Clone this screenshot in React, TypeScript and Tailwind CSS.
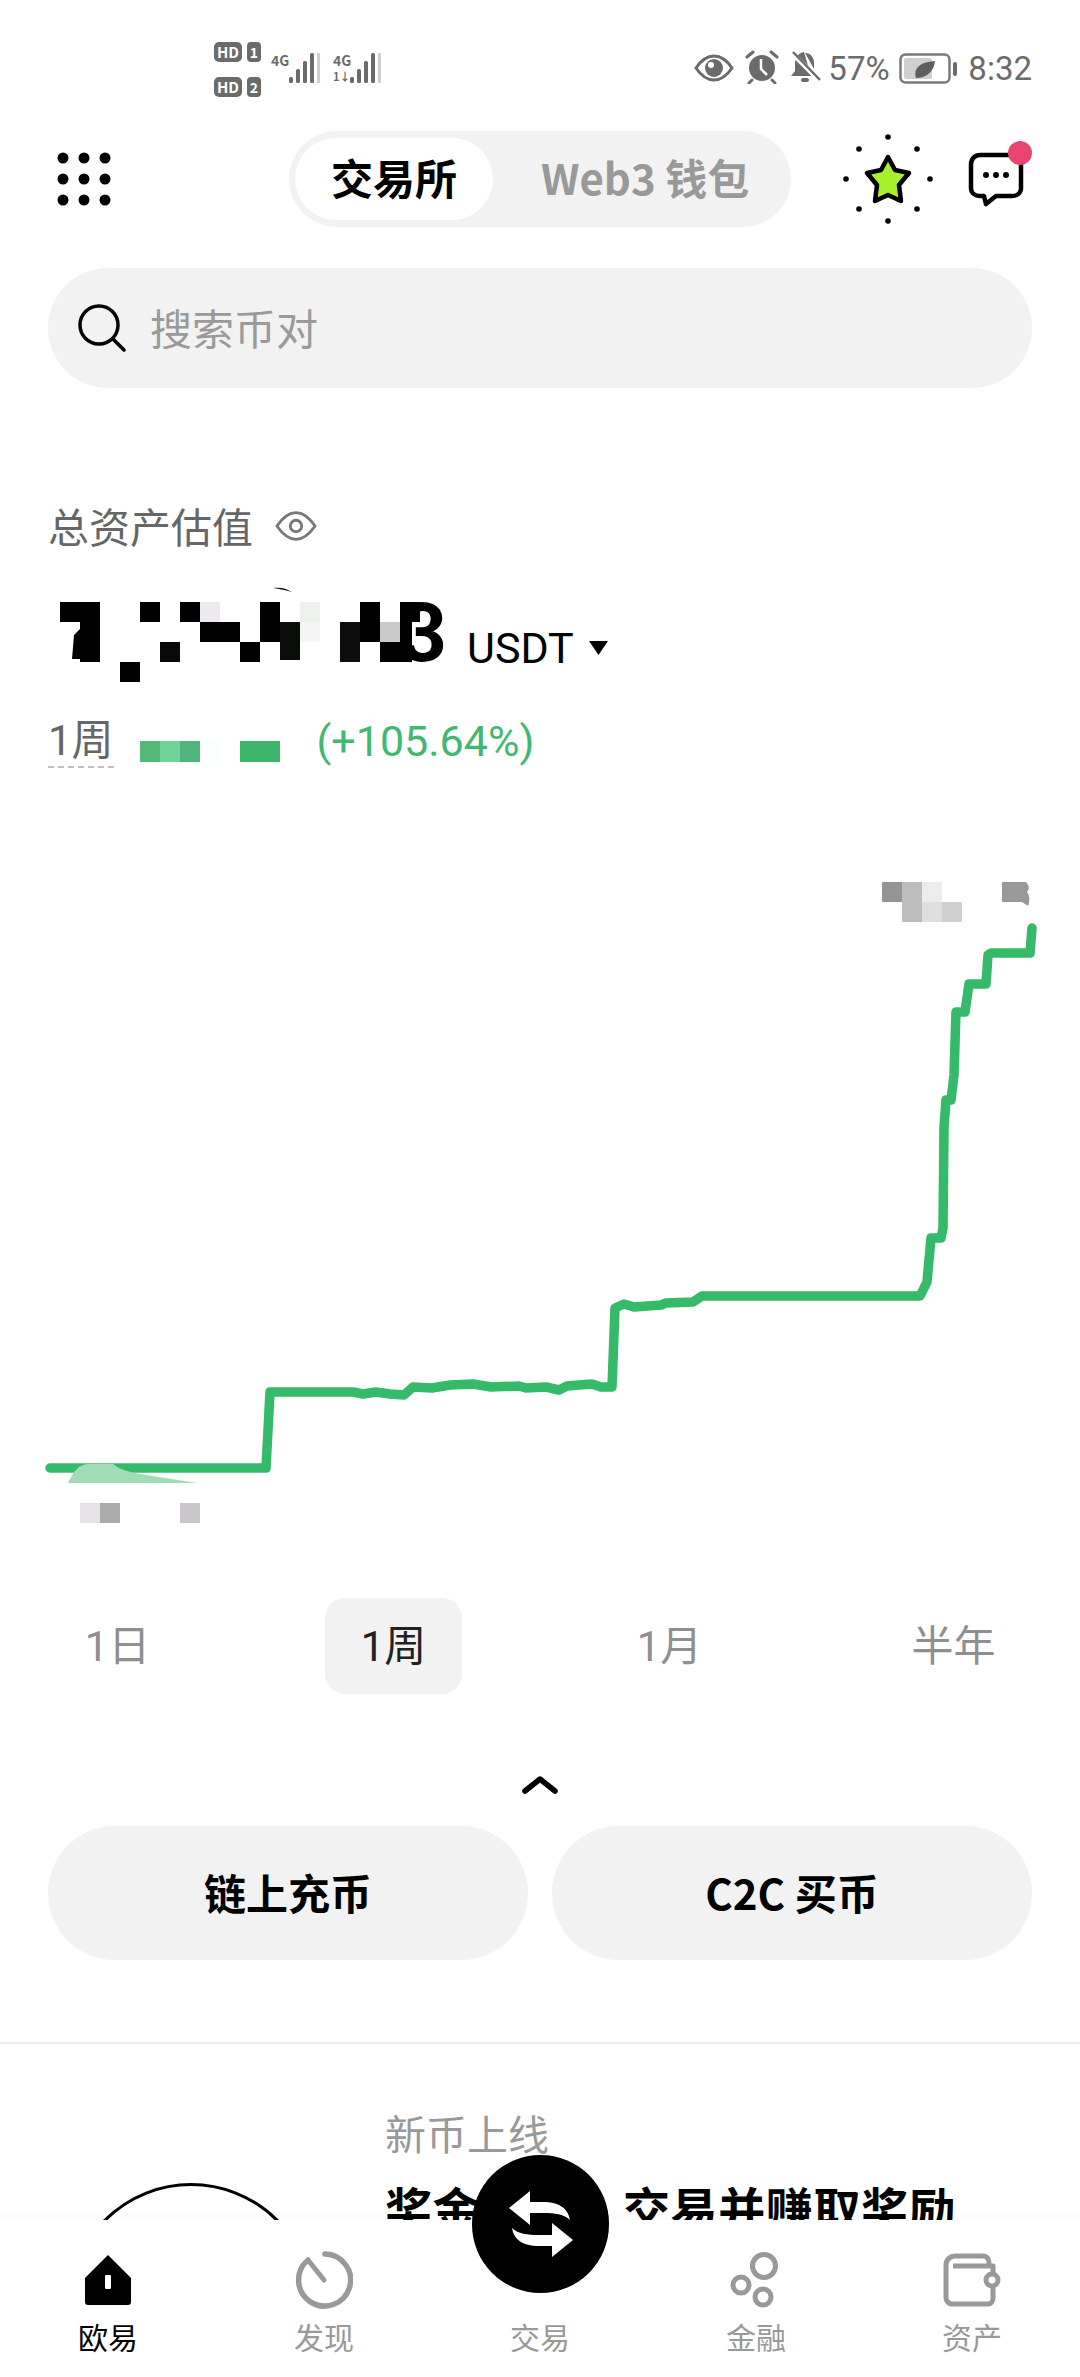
import React from "react";

const Green = "#34ba69";

function HdBadge({ n }: { n: string }) {
  return (
    <div className="flex items-center gap-[5px] h-[20px]">
      <span className="w-[28px] h-[20px] rounded-[5px] bg-[#6b6b6b] text-white text-[15px] font-bold leading-[20px] text-center">HD</span>
      <span className="w-[14px] h-[20px] rounded-[4px] bg-[#6b6b6b] text-white text-[14px] font-bold leading-[20px] text-center">{n}</span>
    </div>
  );
}

function Signal({ off = 0 }: { off?: number }) {
  const hs = [6, 14, 22, 30];
  return (
    <svg width="34" height="30" viewBox="0 0 34 30">
      {hs.map((h, i) => (
        <rect key={i} x={off + i * 7} y={30 - h} width="4" height={h} rx="1.5" fill="#6b6b6b" />
      ))}
      <rect x={off + 28} y="0" width="3" height="30" fill="#cfcfcf" />
    </svg>
  );
}

function StatusBar() {
  return (
    <div className="h-[130px] flex">
      <div className="ml-[214px] pt-[42px] flex flex-col gap-[15px]">
        <HdBadge n="1" />
        <HdBadge n="2" />
      </div>
      <div className="ml-[10px] pt-[52px] w-[50px] relative">
        <span className="absolute left-0 top-[52px] text-[14px] leading-[16px] font-bold text-[#6b6b6b]">4G</span>
        <div className="absolute left-[18px] top-[53px]"><Signal /></div>
      </div>
      <div className="ml-[12px] w-[50px] relative">
        <span className="absolute left-0 top-[52px] text-[14px] leading-[16px] font-bold text-[#6b6b6b]">4G</span>
        <span className="absolute left-0 top-[69px] text-[11px] leading-[14px] font-bold text-[#6b6b6b]">1↓</span>
        <div className="absolute left-[17px] top-[53px]"><Signal /></div>
      </div>
      <div className="ml-auto mr-[48px] pt-[50px] h-[90px] flex items-start text-[#6b6b6b] text-[33px] leading-[38px]">
        <svg width="40" height="28" viewBox="0 0 40 28" className="mt-[4px]">
          <path d="M2 14C8 5 14 2 20 2s12 3 18 12c-6 9-12 12-18 12S8 23 2 14z" fill="none" stroke="#6b6b6b" strokeWidth="3" />
          <circle cx="20" cy="14" r="9" fill="#6b6b6b" />
          <circle cx="17" cy="11" r="3" fill="#fff" />
        </svg>
        <svg width="36" height="34" viewBox="0 0 36 34" className="ml-[10px]">
          <circle cx="18" cy="18" r="13" fill="#6b6b6b" />
          <path d="M17 9v10l6 6" fill="none" stroke="#fff" strokeWidth="2.5" />
          <path d="M3 7l6-5M33 7l-6-5M8 30l-3 3M28 30l3 3" stroke="#6b6b6b" strokeWidth="3" strokeLinecap="round" />
        </svg>
        <svg width="32" height="34" viewBox="0 0 32 34" className="ml-[9px]">
          <path d="M15 2c-6 1-9 6-9 11v8l-4 5h20z" fill="#6b6b6b" />
          <path d="M16 3c6 0 9 5 9 10v6z" fill="#6b6b6b" />
          <path d="M3 3l26 26" stroke="#fff" strokeWidth="5" />
          <path d="M4 2l27 28" stroke="#6b6b6b" strokeWidth="2.5" />
          <rect x="12" y="28" width="8" height="4" rx="2" fill="#6b6b6b" />
        </svg>
        <span className="ml-[7px] w-[64px] [font-family:Roboto,sans-serif]">57%</span>
        <svg width="60" height="32" viewBox="0 0 60 32" className="ml-[7px] mt-[3px]">
          <rect x="1.5" y="1.5" width="49" height="28" rx="5" fill="none" stroke="#7a7a7a" strokeWidth="2.5" />
          <rect x="5" y="5" width="28" height="21" rx="2" fill="#cfcfcf" />
          <path d="M17 25c-3-9 3-16 19-17-1 10-8 17-19 17z" fill="#5f5f5f" />
          <rect x="54" y="9" width="4" height="14" rx="2" fill="#6b6b6b" />
        </svg>
        <span className="ml-[9px] [font-family:Roboto,sans-serif]">8:32</span>
      </div>
    </div>
  );
}

function Header() {
  return (
    <div className="h-[98px] flex items-center">
      <svg width="54" height="54" viewBox="0 0 54 54" className="ml-[57px]">
        {[6, 27, 48].flatMap((y) =>
          [6, 27, 48].map((x) => <circle key={`${x}-${y}`} cx={x} cy={y} r="5.5" fill="#000" />)
        )}
      </svg>
      <div className="ml-[178px] w-[502px] h-[96px] rounded-full bg-[#f2f2f2] p-[8px] flex items-center">
        <div className="w-[198px] h-[82px] pb-[6px] rounded-full bg-white flex items-center justify-center text-[42px] font-bold text-black -ml-[2px]">交易所</div>
        <div className="ml-[48px] pb-[6px] text-[42px] font-bold text-[#999999]">Web3 钱包</div>
      </div>
      <svg width="92" height="96" viewBox="0 0 92 96" className="ml-[51px]">
        {[[46,6],[46,90],[4,48],[88,48],[17,18],[75,18],[17,78],[75,78]].map(([x,y],i)=>(
          <circle key={i} cx={x} cy={y} r="2.8" fill="#000" />
        ))}
        <path d="M46 26l7 13 14 3-10 12 2 16-13-6-13 6 2-16-10-12 14-3z" fill="#a8f02b" stroke="#000" strokeWidth="4.5" strokeLinejoin="round" />
      </svg>
      <div className="ml-[34px] relative w-[56px] h-[56px]">
        <svg width="56" height="56" viewBox="0 0 56 56">
          <path d="M12 4h32c5 0 9 4 9 9v24c0 5-4 8-9 8H28l-10 8-2-8h-4c-5 0-9-3-9-8V13c0-5 4-9 9-9z" fill="none" stroke="#000" strokeWidth="4.5" strokeLinejoin="round" />
          <circle cx="18" cy="24" r="3" fill="#000" /><circle cx="28" cy="24" r="3" fill="#000" /><circle cx="38" cy="24" r="3" fill="#000" />
        </svg>
        <span className="absolute left-[40px] top-[-10px] w-[24px] h-[24px] rounded-full bg-[#e8456e]" />
      </div>
    </div>
  );
}

function Search() {
  return (
    <div className="mt-[40px] mx-[48px] h-[120px] rounded-full bg-[#f2f2f2] flex items-center">
      <svg width="52" height="52" viewBox="0 0 52 52" className="ml-[28px]">
        <circle cx="23" cy="23" r="19" fill="none" stroke="#000" strokeWidth="3.5" />
        <path d="M37 37l11 11" stroke="#000" strokeWidth="3.5" strokeLinecap="round" />
      </svg>
      <span className="ml-[22px] pb-[3px] text-[42px] text-[#9a9a9a]">搜索币对</span>
    </div>
  );
}

function Amount() {
  const blocks: [number, number, number, number, string][] = [
    [60, 602, 40, 20, "#000"], [80, 622, 20, 40, "#000"], [140, 602, 20, 20, "#000"], [180, 602, 20, 20, "#000"],
    [200, 602, 20, 20, "#eee9ee"], [200, 622, 40, 20, "#000"], [160, 642, 20, 20, "#0a0a0a"], [120, 662, 20, 20, "#000"],
    [240, 642, 20, 20, "#000"], [260, 602, 20, 40, "#000"], [280, 622, 20, 38, "#0a0d0a"], [300, 602, 20, 20, "#edf1ed"],
    [300, 622, 20, 20, "#f5f5f5"], [340, 622, 20, 40, "#0d0d0d"], [360, 602, 20, 40, "#000"], [380, 622, 20, 20, "#c9c9c9"],
    [380, 642, 20, 20, "#000"], [400, 602, 20, 20, "#000"],
  ];
  return (
    <div className="mt-[37px] h-[105px] flex">
      <svg width="460" height="105" viewBox="0 585 460 105" className="shrink-0">
        <text x="400" y="661" fontSize="82" fontWeight="700" fontFamily="Roboto, sans-serif" fill="#000">3</text>
        <rect x="400" y="622" width="12" height="40" fill="#000" />
        <path d="M273 588c7-1 13 0 19 4-6-2-12-3-19-4z" fill="#000" />
        <path d="M74 635l-2 24 8 0v-30z" fill="#000" />
        {blocks.map(([x, y, w, h, c], i) => (
          <rect key={i} x={x} y={y} width={w} height={h} fill={c} />
        ))}
      </svg>
      <span className="ml-[7px] mt-[40px] text-[43px] leading-[46px] text-black [font-family:Roboto,sans-serif]">USDT</span>
      <svg width="20" height="14" viewBox="0 0 20 14" className="ml-[15px] mt-[56px]"><path d="M0 0h19l-9.500 14z" fill="#000" /></svg>
    </div>
  );
}

function Change() {
  return (
    <div className="mt-[25px] h-[55px] flex ml-[48px]">
      <span className="h-[53px] pt-[3px] border-b-2 border-dashed border-[#bdbdbd] text-[42px] leading-[46px] text-[#666666] [font-family:Roboto,'Noto_Sans_CJK_SC',sans-serif]">1周</span>
      <div className="ml-[26px] mt-[26px] flex h-[21px]">
        <i className="w-[20px] bg-[#53b978]" /><i className="w-[20px] bg-[#6ed397]" /><i className="w-[20px] bg-[#50b57c]" /><i className="w-[20px] bg-[#fafffd]" />
        <i className="w-[20px]" /><i className="w-[40px] bg-[#3db66c]" />
      </div>
      <span className="ml-[37px] pt-[3px] text-[43px] leading-[46px] text-[#3fb871] [font-family:Roboto,sans-serif]">(+105.64%)</span>
    </div>
  );
}

function Chart() {
  const d =
    "M50 1468H266L270 1392H353L363 1394L376 1392L390 1394L404 1395L413 1387L432 1388L450 1385L473 1384L491 1387L519 1386L526 1388L546 1387L559 1390L567 1386L592 1384L601 1387L612 1387L615 1308L624 1304L634 1307L661 1305L666 1303L693 1302L702 1296H920L927 1282L931 1238H941L943 1228L944 1127L946 1100H951L954 1075L956 1012H965L969 984H986L988 955L991 953H1030L1032 928";
  return (
    <svg width="1080" height="710" viewBox="0 850 1080 710" className="mt-[80px] block">
      <path d={d} fill="none" stroke={Green} strokeWidth="9.5" strokeLinejoin="round" strokeLinecap="round" />
      <path d="M68 1483C74 1470 80 1464 88 1464H113C120 1470 130 1472 140 1474L197 1483z" fill="#9fdcb7" />
      {([[882,882,20,20,"#959595"],[902,882,20,40,"#bdbdbd"],[922,882,20,20,"#ececec"],[922,902,20,20,"#dedede"],[942,902,20,20,"#cfcdcf"],[1002,882,20,20,"#999999"],
         [80,1503,20,20,"#e6e2e6"],[100,1503,20,20,"#ababab"],[180,1503,20,20,"#c9c7c9"]] as [number,number,number,number,string][]).map(([x,y,w,h,c],i)=>(
        <rect key={i} x={x} y={y} width={w} height={h} fill={c} />
      ))}
      <path d="M1022 882h4c3 3 4 7 1 10 3 4 3 9 1 14l-6-4z" fill="#999" />
    </svg>
  );
}

function Periods() {
  const items = [
    { t: "1日", c: "ml-[49px] text-[#8f8f8f]" },
    { t: "1周", c: "ml-[139px] bg-[#f2f2f2] text-[#222222]" },
    { t: "1月", c: "ml-[139px] text-[#8f8f8f]" },
    { t: "半年", c: "ml-[147px] text-[#8f8f8f]" },
  ];
  return (
    <div className="mt-[38px] flex">
      {items.map(({ t, c }) => (
        <div key={t} className={`w-[137px] h-[96px] rounded-[20px] flex items-center justify-center text-[42px] [font-family:Roboto,'Noto_Sans_CJK_SC',sans-serif] ${c}`}>{t}</div>
      ))}
    </div>
  );
}

function Actions() {
  return (
    <>
      <div className="h-[132px] flex justify-center items-end pb-[31px]">
        <svg width="36" height="20" viewBox="0 0 36 20"><path d="M3 16L18 4l15 12" fill="none" stroke="#000" strokeWidth="5.500" strokeLinecap="round" strokeLinejoin="round" /></svg>
      </div>
      <div className="mx-[48px] flex gap-[24px]">
        <div className="flex-1 h-[134px] pb-[4px] rounded-[67px] bg-[#f2f2f2] flex items-center justify-center text-[42px] font-bold text-black">链上充币</div>
        <div className="flex-1 h-[134px] pb-[4px] rounded-[67px] bg-[#f2f2f2] flex items-center justify-center text-[42px] font-bold text-black">C2C 买币</div>
      </div>
      <div className="mt-[82px] h-[2px] bg-[#eeeeee]" />
    </>
  );
}

function Promo() {
  return (
    <div className="flex mt-[60px]">
      <div className="ml-[68px] mt-[79px] w-[246px] h-[246px] rounded-full border-[3px] border-black shrink-0" />
      <div className="ml-[71px]">
        <div className="h-[56px] text-[41px] leading-[56px] text-[#999999]">新币上线</div>
        <div className="mt-[17px] h-[60px] text-[47px] leading-[60px] font-bold text-black whitespace-nowrap tracking-[0.6px]">奖金丰厚，交易并赚取奖励</div>
      </div>
    </div>
  );
}

function NavItem({ label, active, children }: { label: string; active?: boolean; children?: React.ReactNode }) {
  return (
    <div className="flex flex-col items-center">
      <div className="h-[60px] flex items-center justify-center">{children}</div>
      <span className={`mt-[8px] text-[30px] leading-[36px] ${active ? "text-black" : "text-[#999999]"}`}>{label}</span>
    </div>
  );
}

function BottomNav() {
  return (
    <div className="absolute left-0 right-0 top-[2220px] h-[157px] bg-white pt-[30px] grid grid-cols-5 shadow-[0_-4px_8px_rgba(0,0,0,0.025)]">
      <NavItem label="欧易" active>
        <svg width="50" height="52" viewBox="0 0 50 52">
          <path d="M25 1L48 24V48a3 3 0 0 1-3 3H5a3 3 0 0 1-3-3V24z" fill="#000" />
          <rect x="22" y="21" width="6" height="14" rx="1" fill="#fff" />
        </svg>
      </NavItem>
      <NavItem label="发现">
        <svg width="58" height="58" viewBox="0 0 58 58">
          <path d="M30 3A26 26 0 1 1 13 9" fill="none" stroke="#999" strokeWidth="5.500" strokeLinecap="round" />
          <path d="M13 9l16 20" fill="none" stroke="#999" strokeWidth="5" strokeLinecap="round" />
        </svg>
      </NavItem>
      <NavItem label="交易" />
      <NavItem label="金融">
        <svg width="52" height="56" viewBox="0 0 52 56" fill="none" stroke="#999" strokeWidth="5">
          <circle cx="34" cy="14" r="11.500" />
          <circle cx="11" cy="33" r="8" />
          <circle cx="33" cy="45" r="8" />
        </svg>
      </NavItem>
      <NavItem label="资产">
        <svg width="58" height="54" viewBox="0 0 58 54" fill="none" stroke="#999" strokeWidth="5" strokeLinejoin="round">
          <path d="M3 12c0-5 4-9 9-9h28c4 0 6 3 6 7v3" />
          <path d="M3 12v33c0 3 3 6 6 6h36c3 0 5-3 5-6V13H10" />
          <circle cx="49" cy="27" r="6" fill="#fff" />
        </svg>
      </NavItem>
      <div className="absolute left-[472px] top-[-65px] w-[137px] h-[138px] rounded-full bg-black flex items-center justify-center">
        <svg width="68" height="70" viewBox="0 0 68 70">
          <path d="M2 19L23 2V13H36C50 13 61 18 63 31C57 25 48 24 36 24H23V36z" fill="#fff" />
          <path d="M66 51L45 68V57H32C18 57 7 52 5 39C11 45 20 46 32 46H45V34z" fill="#fff" />
        </svg>
      </div>
    </div>
  );
}

export default function App() {
  return (
    <div className="relative w-[1080px] h-[2377px] overflow-hidden bg-white [font-family:'Noto_Sans_CJK_SC','Noto_Sans',sans-serif]">
      <StatusBar />
      <Header />
      <Search />
      <div className="mt-[116px] h-[44px] ml-[48px] flex items-center">
        <span className="text-[41px] leading-[44px] text-[#666666] -mt-[2px]">总资产估值</span>
        <svg width="42" height="32" viewBox="0 0 44 32" className="ml-[22px]">
          <path d="M2 16C9 6 15 2 22 2s13 4 20 14c-7 10-13 14-20 14S9 26 2 16z" fill="none" stroke="#777" strokeWidth="3" />
          <circle cx="22" cy="16" r="6" fill="none" stroke="#777" strokeWidth="3" />
        </svg>
      </div>
      <Amount />
      <Change />
      <Chart />
      <Periods />
      <Actions />
      <Promo />
      <BottomNav />
    </div>
  );
}
